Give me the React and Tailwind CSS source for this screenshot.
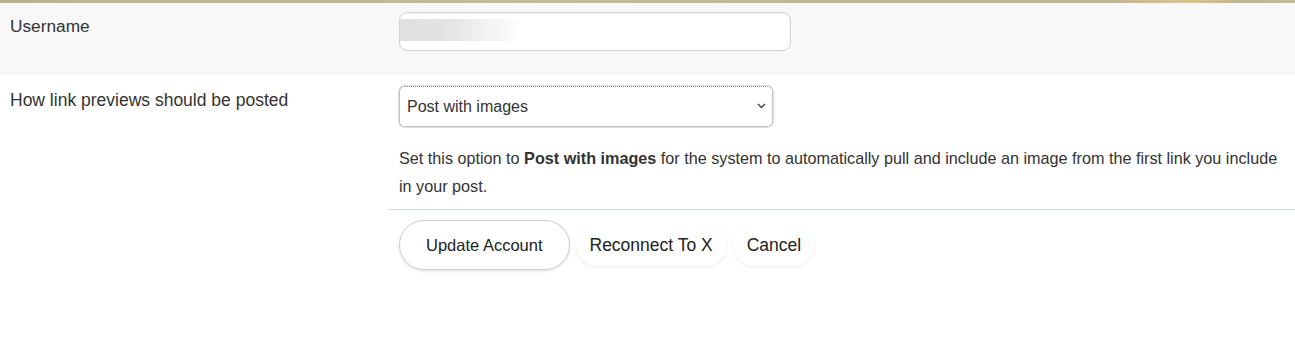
import { useState } from "react";

export default function App() {
  const [preview, setPreview] = useState("images");

  return (
    <div className="min-h-[350px] bg-white font-['Liberation_Sans',Arial,sans-serif] text-[#333]">
      {/* top strip */}
      <div className="h-[3px] bg-[linear-gradient(90deg,#b9b38c_0%,#c2bb94_40%,#bdb68e_85%,#d9c48a_92%,#bdb68e_96%,#c3bc95_100%)]" />

      {/* Username row */}
      <div className="flex h-[72px] bg-[#f8f8f8]">
        <div className="w-[388px] pl-[10px] pt-[11px] text-[17.3px]">Username</div>
        <div className="pl-[11px] pt-[9px]">
          <div className="relative h-[39px] w-[392px] rounded-[8px] border border-[#d3d3d3] bg-white shadow-[inset_0_1px_2px_rgba(0,0,0,0.06)]">
            {/* blurred username */}
            <div className="absolute left-0 top-[6px] h-[22px] w-[120px] bg-[linear-gradient(90deg,#e0e0e0_0%,#e2e2e2_35%,#f5f5f5_80%,#ffffff_100%)]" />
          </div>
        </div>
      </div>

      {/* Link previews row */}
      <div className="flex">
        <div className="w-[388px] pl-[10px] pt-[12px] text-[17.5px]">How link previews should be posted</div>
        <div className="flex-1">
          <div className="pl-[11px] pt-[11px]">
            <div className="relative w-[374px]">
              <select
                value={preview}
                onChange={(e) => setPreview(e.target.value)}
                className="h-[41px] w-full appearance-none rounded-[6px] border border-dotted border-[#8a8a8a] bg-white pl-[7px] text-[16px] text-[#333] shadow-[0_0_0_1px_#ddd] outline-none"
              >
                <option value="images">Post with images</option>
                <option value="text">Post as text</option>
              </select>
              <svg className="pointer-events-none absolute right-[7px] top-[17px]" width="9" height="6" viewBox="0 0 9 6" fill="none">
                <path d="M1 1l3.5 3.5L8 1" stroke="#444" strokeWidth="1.5" />
              </svg>
            </div>
            <p className="mt-[17px] pr-[13px] text-[16.2px] leading-[28px]">
              Set this option to <b>Post with images</b> for the system to automatically pull and include an image from the first link you include in your post.
            </p>
          </div>
          <div className="mt-[9px] border-t border-[#d3dae6]" />
          <div className="flex items-center gap-[6px] pl-[11px] pt-[10px]">
            <button className="h-[50px] rounded-full border border-[#d0d0d0] bg-white px-[26px] text-[16.5px] text-[#222] shadow-[0_1px_3px_rgba(0,0,0,0.12)]">
              Update Account
            </button>
            <button className="h-[42px] rounded-full bg-white px-[14px] text-[17.5px] text-[#222] shadow-[0_1px_3px_rgba(0,0,0,0.08)]">
              Reconnect To X
            </button>
            <button className="h-[42px] rounded-full bg-white px-[14px] text-[17.5px] text-[#222] shadow-[0_1px_3px_rgba(0,0,0,0.08)]">
              Cancel
            </button>
          </div>
        </div>
      </div>
    </div>
  );
}
